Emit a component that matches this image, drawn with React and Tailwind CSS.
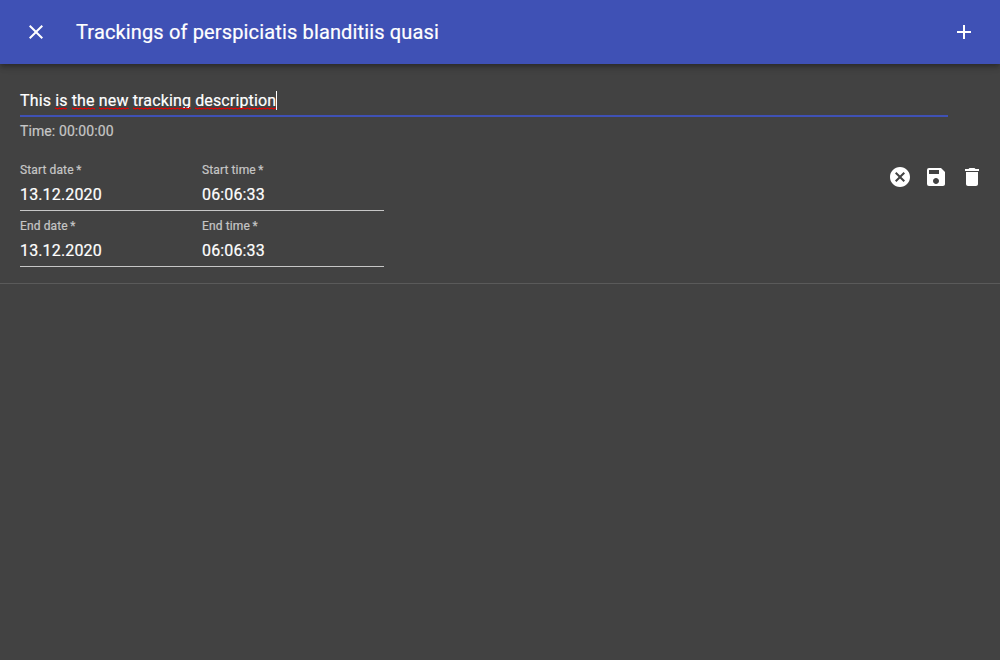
import React from "react";
import { MdClose, MdAdd, MdCancel, MdSave, MdDelete } from "react-icons/md";

function Field({ label, value }) {
  return (
    <div className="flex h-14 w-[182px] flex-col border-b border-[#c6c6c6] pt-2">
      <span className="text-xs leading-[14px] tracking-[0.12px] text-[#c6c6c6]">
        {label}<span className="ml-[2.5px]">*</span>
      </span>
      <span className="mt-[9px] text-base leading-[18px] tracking-[0.14px]">{value}</span>
    </div>
  );
}

// A word with the spell checker's zigzag below it.
function Misspelled({ word }) {
  const id = "zigzag-" + word;
  return (
    <span className="relative">
      {word}
      <svg className="absolute top-[16px] left-0 h-[3px] w-full" shapeRendering="crispEdges">
        <defs>
          <pattern id={id} width="4" height="3" patternUnits="userSpaceOnUse">
            <rect x="0" y="0" width="1" height="1" fill="#9a1a1a" />
            <rect x="0" y="1" width="4" height="1" fill="#d80808" />
            <rect x="2" y="2" width="1" height="1" fill="#b40d0d" />
          </pattern>
        </defs>
        <rect width="100%" height="3" fill={`url(#${id})`} />
      </svg>
    </span>
  );
}

export default function App() {
  return (
    <div className="flex h-screen flex-col bg-[#424242] font-['Roboto',sans-serif] text-white [-webkit-text-stroke:0.2px]">
      <header className="z-10 flex h-16 shrink-0 items-center bg-[#3f51b5] px-6 shadow-[0_2px_4px_-1px_rgba(0,0,0,0.2),0_4px_5px_rgba(0,0,0,0.14),0_1px_10px_rgba(0,0,0,0.12)]">
        <MdClose className="size-6" />
        <h1 className="ml-7 flex-1 text-xl leading-6 tracking-[0.145px]">Trackings of perspiciatis blanditiis quasi</h1>
        <MdAdd className="size-6" />
      </header>
      <main className="flex h-[220px] justify-between border-b border-[#5a5a5a] pl-5">
        <div className="w-[928px] shrink-0 pt-[27px]">
          <div className="flex h-[26px] items-start border-b-2 border-[#3f51b5]">
            <span className="mt-px text-base leading-[18px] tracking-[0.14px] whitespace-pre">
              This <Misspelled word="is" /> <Misspelled word="the" /> <Misspelled word="new" />{" "}
              <Misspelled word="tracking" /> <Misspelled word="description" />
            </span>
            <span className="h-[19px] w-px bg-white" />
          </div>
          <div className="mt-[6px] text-sm leading-4 tracking-[0.1px] text-[#c6c6c6]">Time: 00:00:00</div>
          <div className="mt-4 flex">
            <Field label="Start date" value="13.12.2020" />
            <Field label="Start time" value="06:06:33" />
          </div>
          <div className="flex">
            <Field label="End date" value="13.12.2020" />
            <Field label="End time" value="06:06:33" />
          </div>
        </div>
        <div className="-ml-[60px] mt-[101px] mr-4 flex h-6 shrink-0 gap-3">
          <MdCancel className="size-6" />
          <MdSave className="size-6" />
          <MdDelete className="size-6" />
        </div>
      </main>
    </div>
  );
}
